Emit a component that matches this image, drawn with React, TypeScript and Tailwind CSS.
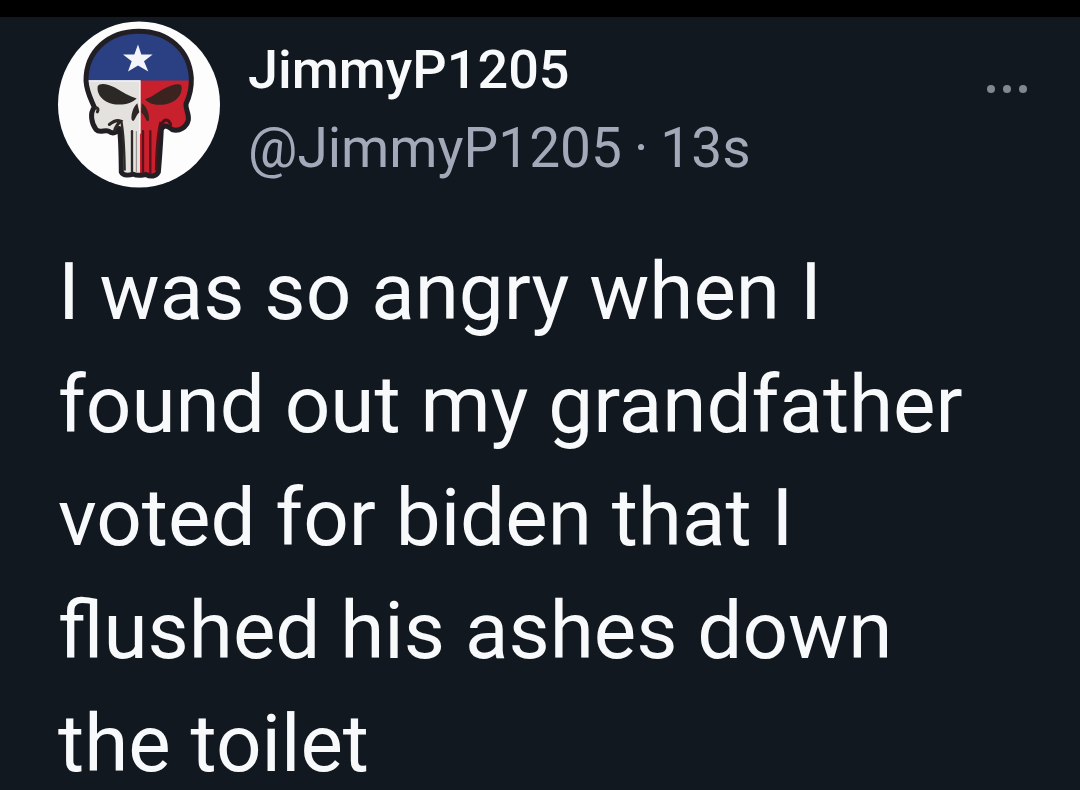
const SKULL =
    "M296 92C205 92 138 152 138 240C140 276 154 298 163 320C149 338 154 368 168 387C180 400 194 386 206 392C218 402 232 396 238 384C242 402 243 430 244 515C250 527 270 524 280 521C295 528 306 524 318 522C332 530 348 528 355 515C360 460 362 420 364 386C374 370 386 378 396 387C418 394 440 380 445 358C448 342 436 326 438 310C450 285 455 265 454 232C448 148 385 92 296 92Z";

function Avatar() {
    return (
        <svg
            viewBox="54 62 486 500"
            className="h-[167px] w-[162px] shrink-0"
            role="img"
            aria-label="JimmyP1205"
        >
            <defs>
                <clipPath id="skull">
                    <path d={SKULL} />
                </clipPath>
            </defs>
            <ellipse cx="297" cy="312" rx="243" ry="249" fill="#fdfdfd" />
            <g clipPath="url(#skull)">
                <rect x="120" y="80" width="350" height="162" fill="#2b3f83" />
                <rect x="120" y="240" width="180" height="300" fill="#e4e2df" />
                <rect x="300" y="240" width="170" height="300" fill="#c8202d" />
                <path d="M120 241H300V400" fill="none" stroke="#fafafa" strokeWidth="4" />
            </g>
            <path
                d={SKULL}
                fill="none"
                stroke="#211f24"
                strokeWidth="15"
                strokeLinejoin="round"
            />
            <path
                d="M294 132L304 162L338 162L312 182L325 213L294 195L264 213L275 182L249 162L283 162Z"
                fill="#f4f5fa"
            />
            {/* eyes */}
            <path
                d="M173 257C180 246 203 250 226 262C248 275 268 288 290 294C278 307 255 314 228 312C195 308 169 286 173 257Z"
                fill="#2b2825"
            />
            <path
                d="M424 255C416 246 394 253 372 265C350 277 332 293 315 296C326 309 346 316 374 312C407 306 430 284 424 255Z"
                fill="#3b2320"
            />
            {/* nose */}
            <path d="M292 308C280 318 272 342 275 358C283 370 286 345 298 335Z" fill="#2b2825" />
            <path d="M306 308C318 316 329 338 327 359C319 370 317 345 303 335Z" fill="#3b2320" />
            {/* cheeks */}
            <path
                d="M168 322C174 322 176 328 172 334M208 372C220 362 232 358 242 362C232 372 226 380 224 390"
                fill="none"
                stroke="#2b2825"
                strokeWidth="9"
                strokeLinecap="round"
            />
            <path d="M244 362C250 395 253 430 254 510" fill="none" stroke="#2b2825" strokeWidth="7" />
            <path d="M362 364C354 390 350 430 348 510" fill="none" stroke="#4c1218" strokeWidth="7" />
            <path
                d="M366 370C372 354 386 354 392 372"
                fill="none"
                stroke="#4c1218"
                strokeWidth="9"
                strokeLinecap="round"
            />
            {/* teeth */}
            <path d="M276 392V516" stroke="#2b2825" strokeWidth="7" strokeLinecap="round" />
            <path d="M289 392V516" stroke="#8b8583" strokeWidth="3" />
            <path
                d="M309 392V516M331 392V516"
                stroke="#5c1119"
                strokeWidth="7"
                strokeLinecap="round"
            />
        </svg>
    );
}

export default function App() {
    return (
        <main className="min-h-screen border-t-[17px] border-black bg-[#111820] font-['Roboto',sans-serif] text-[#f7f9fa]">
            <article className="pt-1 pr-12 pl-[58px]">
                <header className="flex items-start gap-7">
                    <Avatar />
                    <div className="flex-1 pt-[10px] leading-[78px]">
                        <h1 className="text-[54px] font-medium">JimmyP1205</h1>
                        <p className="flex gap-3 text-[55px] text-[#a3a9b8]">
                            <a href="#profile">@JimmyP1205</a>
                            <span>·</span>
                            <time>13s</time>
                        </p>
                    </div>
                    <button type="button" aria-label="More" className="mt-[58px] p-1">
                        <svg viewBox="0 0 42 12" className="h-3 w-[42px]" fill="#82878f">
                            <circle cx="5" cy="6" r="4" />
                            <circle cx="21" cy="6" r="4" />
                            <circle cx="37" cy="6" r="4" />
                        </svg>
                    </button>
                </header>
                <p className="mt-12 pr-10 text-[80px] leading-[113px]">
                    I was so angry when I found out my grandfather voted for biden that I flushed
                    his ashes down the toilet
                </p>
            </article>
        </main>
    );
}
